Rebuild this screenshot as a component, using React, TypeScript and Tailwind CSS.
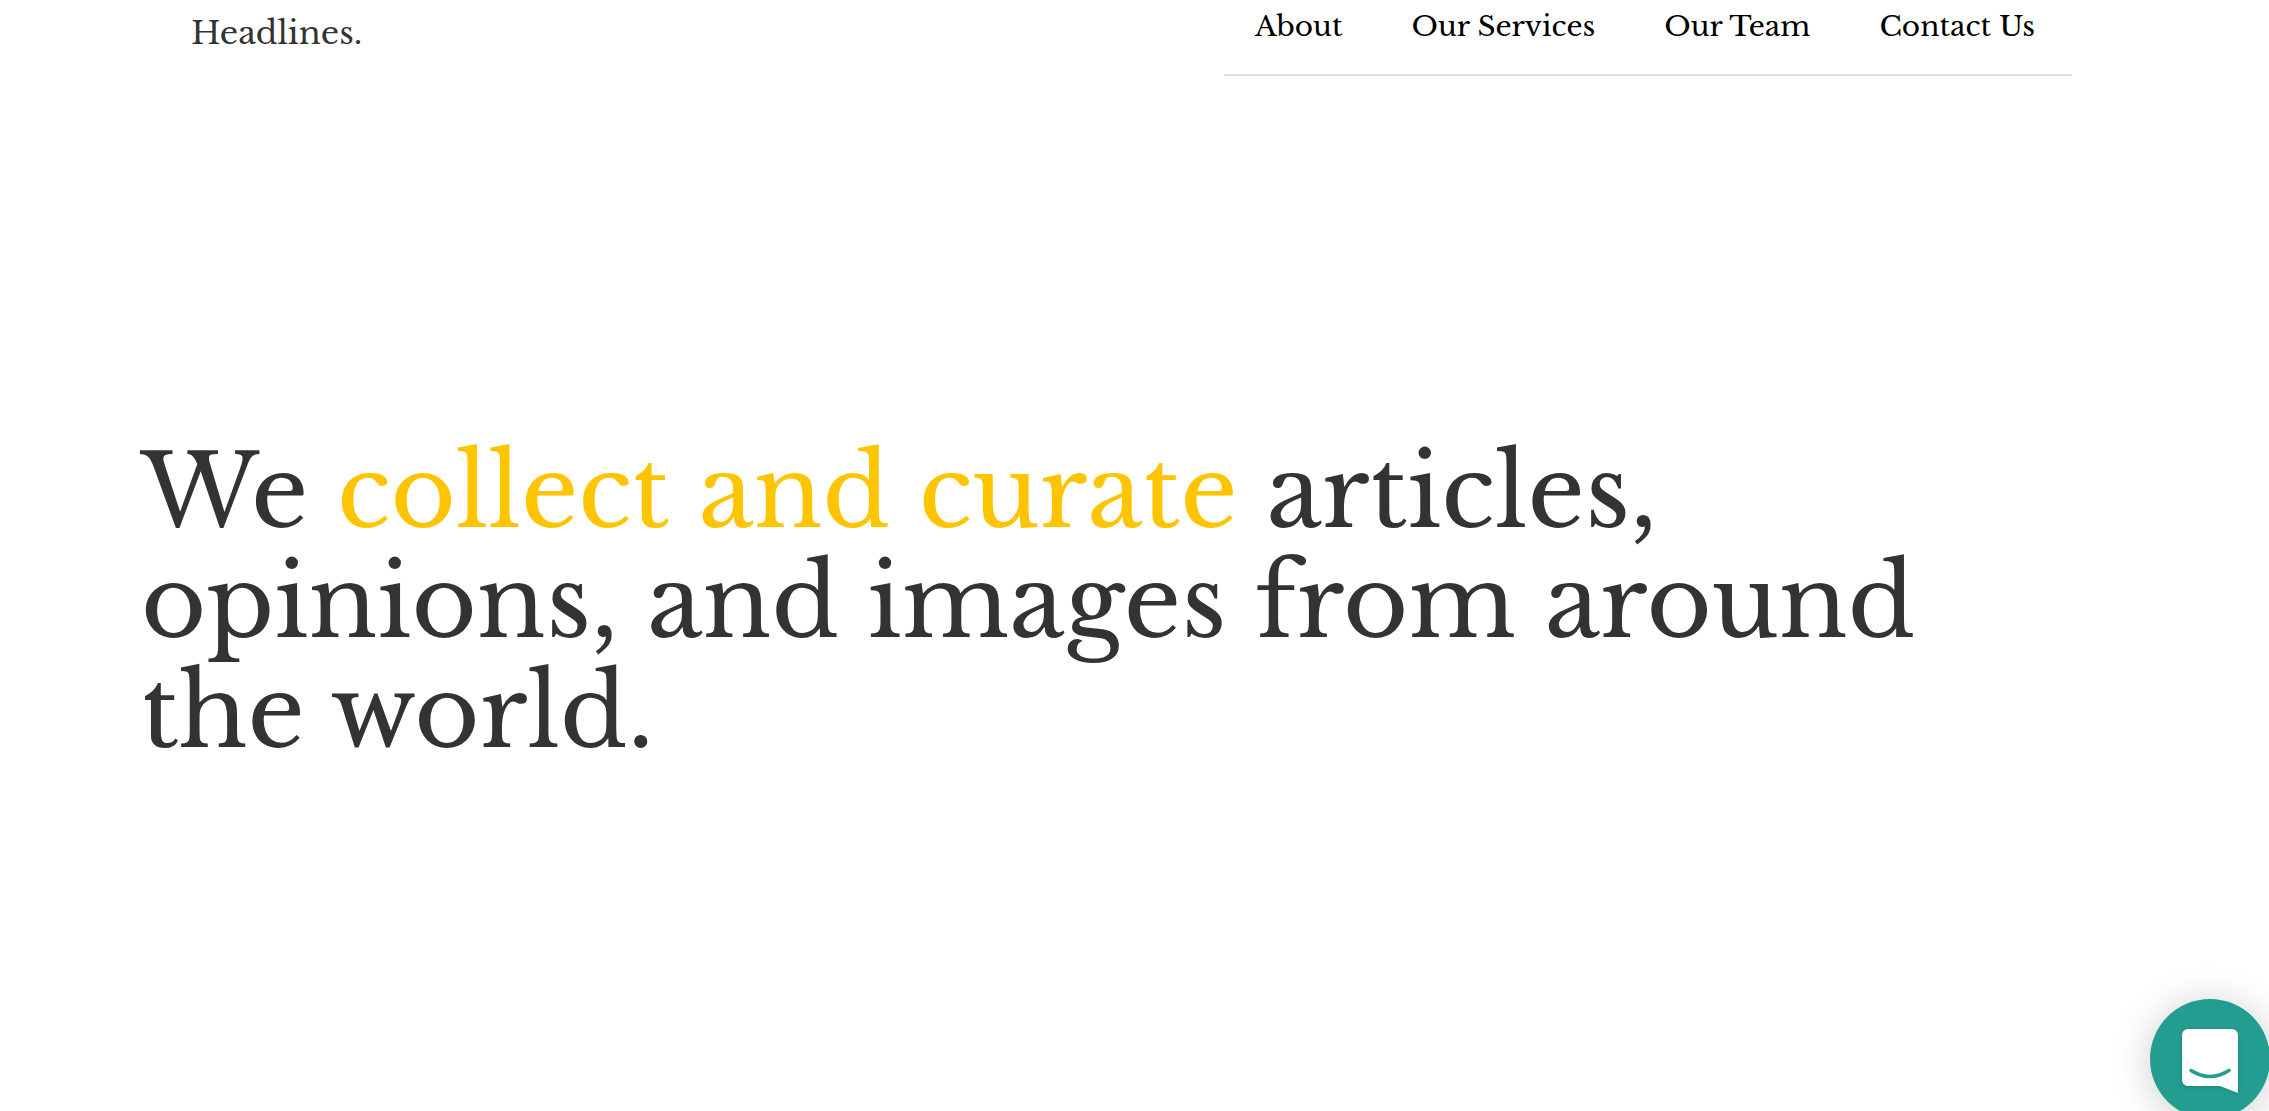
const links = ["About", "Our Services", "Our Team", "Contact Us"];

export default function App() {
  return (
    <div className="relative min-h-screen overflow-hidden bg-white font-['Libre_Baskerville','Liberation_Serif',serif]">
      <header className="flex items-start justify-between pl-[191px] pr-[197px]">
        <a href="#" className="pt-[9px] text-[32px] leading-12 text-[#333]">Headlines.</a>
        <nav className="flex h-[76px] gap-[69px] border-b-2 border-[#dedede] pl-[31px] pr-[37px] pt-[3px] text-[28px] leading-12 text-black">
          {links.map((l) => (
            <a key={l} href="#" className="whitespace-nowrap">{l}</a>
          ))}
        </nav>
      </header>
      <main className="px-[141px] pt-[361px]">
        <h1 className="text-[100px] leading-[110px] text-[#333]">
          We <span className="text-[#ffc400]">collect and curate</span> articles,
          <br />opinions, and images from around
          <br />the world.
        </h1>
      </main>
      <button aria-label="Open chat" className="fixed -right-px -bottom-2 flex size-[120px] items-center justify-center rounded-full bg-[#239d90] pt-1 shadow-[0_4px_40px_rgba(0,0,0,0.2)]">
        <svg viewBox="0 0 56 64" className="h-16 w-14 drop-shadow-sm" fill="none">
          <path d="M6 0h44a6 6 0 0 1 6 6v58l-18-7H6a6 6 0 0 1-6-6V6a6 6 0 0 1 6-6Z" fill="white" />
          <path d="M9 41.5q19 12 38 0" stroke="#239d90" strokeWidth="3.5" strokeLinecap="round" />
        </svg>
      </button>
    </div>
  );
}
